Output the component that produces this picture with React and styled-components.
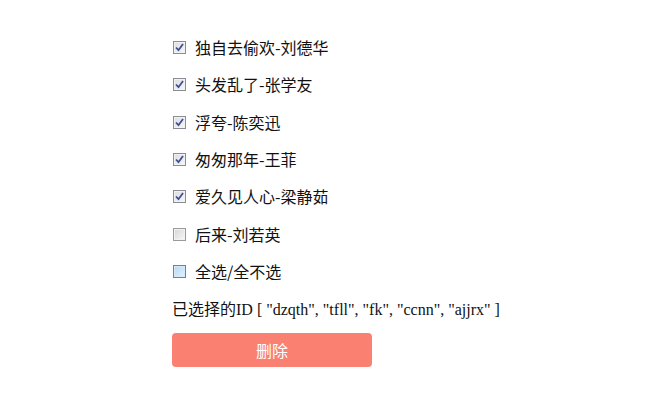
import React, { useState } from 'react'
import styled, { createGlobalStyle } from 'styled-components'

const GlobalStyle = createGlobalStyle`
  body {
    margin: 0;
    background: #fff;
    font-family: "Noto Sans CJK SC", "Liberation Sans", sans-serif;
  }
`

const songs = [
  { id: 'dzqth', name: '独自去偷欢-刘德华' },
  { id: 'tfll', name: '头发乱了-张学友' },
  { id: 'fk', name: '浮夸-陈奕迅' },
  { id: 'ccnn', name: '匆匆那年-王菲' },
  { id: 'ajjrx', name: '爱久见人心-梁静茹' },
  { id: 'hl', name: '后来-刘若英' },
]

const CheckBox = ({ checked, hover }) => (
  <Box checked={checked} hover={hover}>
    {checked && (
      <svg width="9" height="9" viewBox="0 0 9 9">
        <path d="M1 4.5 L3.5 7.2 L8 1" fill="none" stroke="#3d4f8f" strokeWidth="1.8" />
      </svg>
    )}
  </Box>
)

const App = () => {
  const [selected, setSelected] = useState(['dzqth', 'tfll', 'fk', 'ccnn', 'ajjrx'])

  const toggle = (id) => {
    setSelected(selected.includes(id) ? selected.filter(s => s !== id) : [...selected, id])
  }
  const allChecked = selected.length === songs.length

  return (
    <Wrapper>
      <GlobalStyle />
      {songs.map(song => (
        <Row key={song.id} onClick={() => toggle(song.id)}>
          <CheckBox checked={selected.includes(song.id)} />
          <Label>{song.name}</Label>
        </Row>
      ))}
      <Row onClick={() => setSelected(allChecked ? [] : songs.map(s => s.id))}>
        <CheckBox checked={allChecked} hover />
        <Label>全选/全不选</Label>
      </Row>
      <Selected>
        已选择的ID [ {selected.map(s => `"${s}"`).join(', ')} ]
      </Selected>
      <DeleteButton>删除</DeleteButton>
    </Wrapper>
  )
}

export default App

const Wrapper = styled.div`
  display: flex;
  flex-direction: column;
  align-items: flex-start;
  padding: 29px 0 0 172px;
`
const Row = styled.div`
  display: flex;
  align-items: center;
  height: 37.3px;
  cursor: pointer;
`
const Box = styled.span`
  box-sizing: border-box;
  width: 13px;
  height: 13px;
  margin-left: 1px;
  margin-right: 9px;
  display: flex;
  align-items: center;
  justify-content: center;
  border: 1px solid ${p => (p.hover ? '#3b8ed8' : p.checked ? '#8a8d96' : '#9a9a9a')};
  background: ${p =>
    p.hover
      ? 'linear-gradient(135deg, #b4d8f5 0%, #e4f2fd 100%)'
      : p.checked
      ? 'linear-gradient(135deg, #dcdde2 0%, #f7f7f9 100%)'
      : 'linear-gradient(135deg, #d6d6d6 0%, #f8f8f8 100%)'};
  box-shadow: inset 0 0 0 1px ${p => (p.hover ? '#d6eafa' : '#f2f2f2')};
`
const Label = styled.span`
  font-size: 16px;
  color: #111;
  line-height: 21px;
`
const Selected = styled.div`
  font-family: "Liberation Serif", "Noto Sans CJK SC", serif;
  font-size: 16px;
  color: #111;
  height: 36px;
  display: flex;
  align-items: center;
`
const DeleteButton = styled.button`
  margin-top: 7px;
  width: 200px;
  height: 34px;
  border: none;
  border-radius: 4px;
  background: #fa8072;
  color: #fff;
  font-family: "Noto Sans CJK SC", sans-serif;
  font-size: 16px;
  cursor: pointer;
`
